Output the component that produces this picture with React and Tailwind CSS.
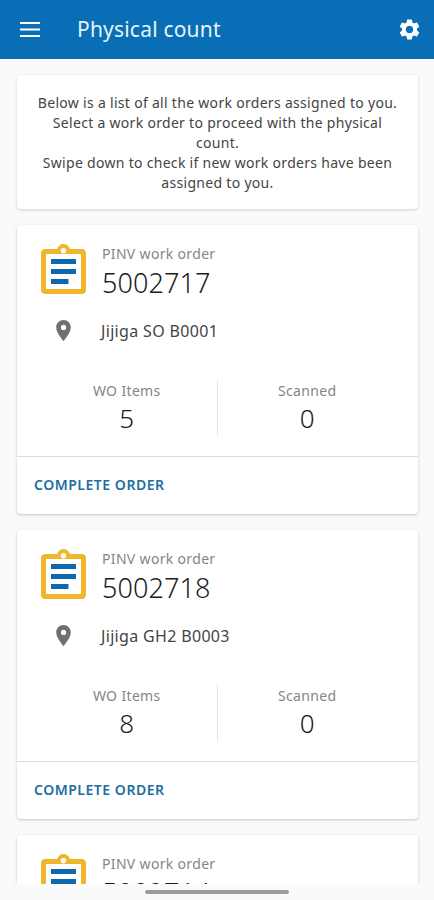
import { MdPlace, MdSettings } from "react-icons/md";

const WORK_ORDERS = [
  { number: "5002717", site: "Jijiga SO B0001", items: 5, scanned: 0 },
  { number: "5002718", site: "Jijiga GH2 B0003", items: 8, scanned: 0 },
  { number: "5002714" },
];

function MenuIcon() {
  return (
    <svg
      viewBox="0 0 20 16"
      className="h-4 w-5"
      fill="none"
      stroke="currentColor"
      strokeWidth="2"
    >
      <path d="M0 1h20M0 7.5h20M0 14h20" />
    </svg>
  );
}

function ClipboardIcon() {
  return (
    <svg viewBox="0 0 18 20" className="h-[50px] w-[45px] shrink-0">
      <path
        fill="#efb52b"
        fillRule="evenodd"
        d="M16.4 2H11.6C11.2.8 10.2 0 9 0S6.8.8 6.4 2H1.6C.7 2 0 2.7 0 3.6v14.8c0 .9.7 1.6 1.6 1.6h14.8c.9 0 1.6-.7 1.6-1.6V3.6c0-.9-.7-1.6-1.6-1.6ZM9 1.6a1.1 1.1 0 1 1 0 2.2 1.1 1.1 0 0 1 0-2.2ZM16 18H2V4h14v14Z"
      />
      <path fill="#0d68ad" d="M4 6h10v2H4zM4 10h10v2H4zM4 14h7v2H4z" />
    </svg>
  );
}

function Count({ label, value }) {
  return (
    <div className="flex flex-1 flex-col items-center">
      <span className="pt-px text-[14px] leading-5 tracking-[0.35px] text-[#858585]">
        {label}
      </span>
      <span className="pt-px text-[26px] leading-8 font-[350] text-[#1c1c1c]">
        {value}
      </span>
    </div>
  );
}

function WorkOrderCard({ order }) {
  return (
    <article className="h-[289px] shrink-0 rounded-[4px] bg-white shadow-[0_1px_3px_rgba(0,0,0,0.22)]">
      <div className="flex h-[75px] pt-[19px] pl-6">
        <ClipboardIcon />
        <div className="ml-4 flex flex-col">
          <span className="text-[14px] leading-5 tracking-[0.33px] text-[#858585]">
            PINV work order
          </span>
          <span className="mt-0.5 text-[27px] leading-[34px] font-[350] tracking-[0.1px] text-[#1c1c1c]">
            {order.number}
          </span>
        </div>
      </div>

      {order.site ? (
        <>
          <div className="mt-[15px] flex h-8 items-center pl-[34px]">
            <MdPlace className="-mt-0.5 h-[25px] w-[25px] text-[#707070]" />
            <span className="ml-[25px] text-[16px] tracking-[0.33px] text-[#444]">
              {order.site}
            </span>
          </div>

          <div className="mt-[33px] flex h-[56px] pr-[21px] pl-5">
            <Count label="WO Items" value={order.items} />
            <div className="w-px bg-[#e2e2e2]" />
            <Count label="Scanned" value={order.scanned} />
          </div>

          <div className="mt-5 border-t border-[#dedede] px-[17px] pt-[18px]">
            <button className="block text-[14px] leading-5 font-semibold tracking-[0.52px] text-[#1d6f9f]">
              COMPLETE ORDER
            </button>
          </div>
        </>
      ) : null}
    </article>
  );
}

export default function App() {
  return (
    <div className="flex h-[900px] w-[434px] flex-col overflow-hidden bg-[#fafafa] font-['Noto_Sans',sans-serif]">
      <header className="flex h-[59px] shrink-0 items-center bg-[#096eb5] px-5 text-white">
        <MenuIcon />
        <h1 className="ml-[37px] text-[21px] tracking-[0.2px] text-[#e4f4fc]">
          Physical count
        </h1>
        <MdSettings className="-mr-2 ml-auto h-[25px] w-[25px]" />
      </header>

      <main className="flex min-h-0 flex-1 flex-col gap-4 overflow-hidden pt-4 pr-4 pl-[17px]">
        <section className="h-[134px] shrink-0 rounded-[4px] bg-white px-4 pt-[18px] text-center text-[14px] leading-5 tracking-[0.3px] text-[#444] shadow-[0_1px_3px_rgba(0,0,0,0.18)]">
          <p>
            Below is a list of all the work orders assigned to you. Select a
            work order to proceed with the physical count.
          </p>
          <p>
            Swipe down to check if new work orders have been assigned to you.
          </p>
        </section>
        {WORK_ORDERS.map((order) => (
          <WorkOrderCard key={order.number} order={order} />
        ))}
      </main>

      <footer className="flex h-4 shrink-0 justify-center pt-1.5">
        <div className="h-1 w-36 rounded-full bg-[#9c9c9c]" />
      </footer>
    </div>
  );
}
